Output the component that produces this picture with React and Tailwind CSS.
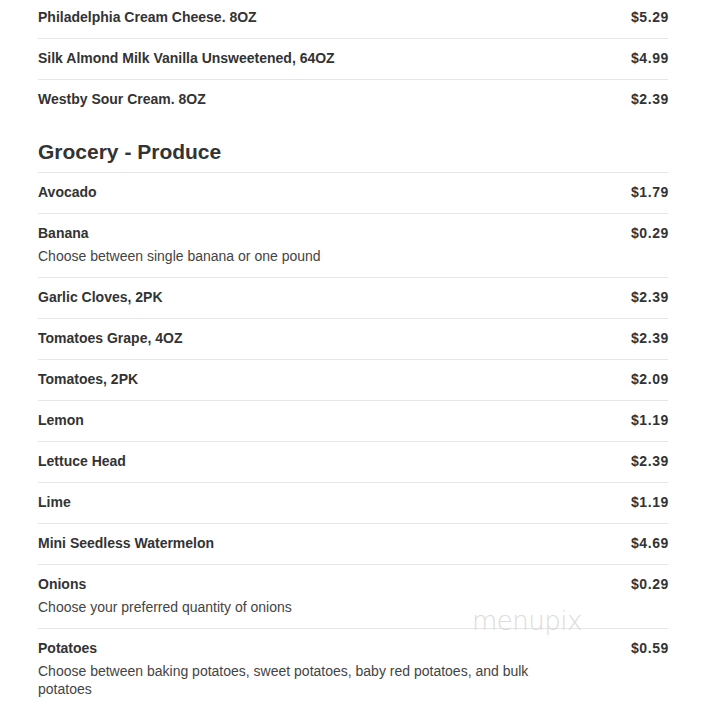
import React from 'react';

const dairy = [
  { name: 'Philadelphia Cream Cheese. 8OZ', price: '$5.29' },
  { name: 'Silk Almond Milk Vanilla Unsweetened, 64OZ', price: '$4.99' },
  { name: 'Westby Sour Cream. 8OZ', price: '$2.39' },
];

const produce = [
  { name: 'Avocado', price: '$1.79' },
  { name: 'Banana', price: '$0.29', desc: 'Choose between single banana or one pound' },
  { name: 'Garlic Cloves, 2PK', price: '$2.39' },
  { name: 'Tomatoes Grape, 4OZ', price: '$2.39' },
  { name: 'Tomatoes, 2PK', price: '$2.09' },
  { name: 'Lemon', price: '$1.19' },
  { name: 'Lettuce Head', price: '$2.39' },
  { name: 'Lime', price: '$1.19' },
  { name: 'Mini Seedless Watermelon', price: '$4.69' },
  { name: 'Onions', price: '$0.29', desc: 'Choose your preferred quantity of onions' },
  {
    name: 'Potatoes',
    price: '$0.59',
    desc: 'Choose between baking potatoes, sweet potatoes, baby red potatoes, and bulk potatoes',
  },
];

const Row = ({ item, first }) => (
  <div
    className={`flex justify-between gap-6 pb-[11px] ${
      first ? 'pt-[7px]' : 'border-t border-[#e6e6e6] pt-[9px]'
    }`}
  >
    <div className="flex-1">
      <div className="text-[14px] leading-[20px] font-bold text-[#333]">{item.name}</div>
      {item.desc && (
        <p className="mt-[4px] mb-[1px] text-[14px] leading-[18px] text-[#444] pr-[60px]">{item.desc}</p>
      )}
    </div>
    <div className="text-[14px] leading-[20px] font-bold text-[#333] tracking-[0.6px] -mr-[1px]">{item.price}</div>
  </div>
);

export default function App() {
  return (
    <div className="relative min-h-[707px] bg-white pl-[38px] pr-[36px] font-['Liberation_Sans',Arial,sans-serif] overflow-hidden">
      {dairy.map((item, i) => (
        <Row key={item.name} item={item} first={i === 0} />
      ))}

      {/* Produce section */}
      <h2 className="mt-[20px] pb-[8px] text-[21px] leading-[24px] font-bold text-[#333]">
        Grocery - Produce
      </h2>
      {produce.map((item) => (
        <Row key={item.name} item={item} />
      ))}

      {/* watermark */}
      <div className="absolute left-[472px] top-[608px] text-[26px] leading-[26px] text-[#dcdcdc] font-['DejaVu_Sans',sans-serif] font-extralight tracking-[-0.5px] pointer-events-none">
        menupix
      </div>
    </div>
  );
}
